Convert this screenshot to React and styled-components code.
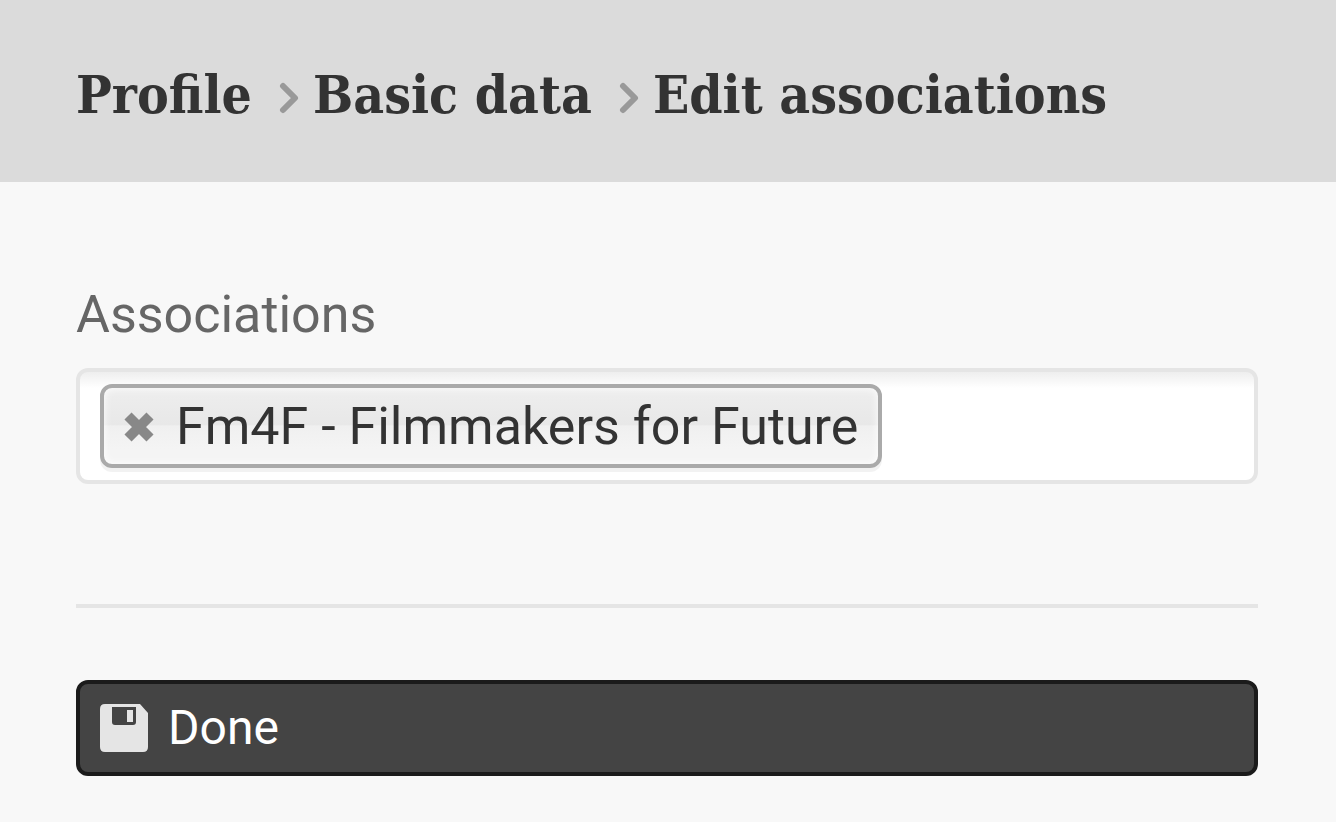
import { Fragment, useState } from "react";
import styled, { createGlobalStyle } from "styled-components";

const GlobalStyle = createGlobalStyle`
  * {
    box-sizing: border-box;
  }
  body {
    margin: 0;
    background: #f8f8f8;
    color: #333;
    font-family: Roboto, "Liberation Sans", sans-serif;
  }
`;

const Header = styled.header`
  padding: 58px 78px 52px 76px;
  background: #dbdbdb;
`;
const Breadcrumbs = styled.nav`
  display: flex;
  flex-wrap: wrap;
  align-items: center;
  font-family: "Roboto Slab", "DejaVu Serif Condensed", "DejaVu Serif", serif;
  font-size: 53px;
  font-weight: 700;
  line-height: 72px;
`;
const Crumb = styled.a`
  color: #333;
  text-decoration: none;
`;
const Chevron = styled.svg`
  width: 20px;
  height: 32px;
  margin: 8px 14px 0 27px;
  fill: none;
  stroke: #999;
  stroke-width: 6px;
  stroke-linecap: round;
  stroke-linejoin: round;
`;

const Form = styled.form`
  padding: 101px 78px 46px 76px;
`;
const Label = styled.label`
  display: block;
  margin-bottom: 21px;
  color: #666;
  font-size: 52px;
  line-height: 64px;
`;
const Choices = styled.div`
  display: flex;
  flex-wrap: wrap;
  gap: 12px;
  padding: 12px 20px;
  border: 4px solid #e5e5e5;
  border-radius: 12px;
  background: #fff linear-gradient(#eee, #fff 16px);
`;
const Choice = styled.div`
  display: flex;
  align-items: center;
  gap: 22px;
  padding: 2px 20px 0;
  border: 4px solid #aaa;
  border-radius: 12px;
  background: linear-gradient(#eee, #e8e8e8 48%, #f0f0f0 50%, #f4f4f4 80%);
  box-shadow: inset 0 0 8px #fff, 0 4px 0 rgba(0, 0, 0, 0.05);
  font-size: 52px;
  line-height: 74px;
`;
const RemoveButton = styled.button`
  display: flex;
  padding: 0;
  border: 0;
  background: none;
  cursor: pointer;
  svg {
    width: 30px;
    height: 30px;
    fill: none;
    stroke: #888;
    stroke-width: 10px;
  }
`;
const SearchInput = styled.input`
  flex: 1;
  min-width: 40px;
  padding: 0;
  border: 0;
  outline: 0;
  background: transparent;
  color: #333;
  font: inherit;
  font-size: 52px;
`;
const Divider = styled.hr`
  height: 4px;
  margin: 120px 0 72px;
  border: 0;
  background: #e5e5e5;
`;
const SubmitButton = styled.button`
  display: flex;
  align-items: center;
  gap: 20px;
  width: 100%;
  padding: 12px 20px;
  border: 4px solid #1b1b1b;
  border-radius: 12px;
  background: #444;
  color: #fff;
  font: inherit;
  font-size: 48px;
  line-height: 64px;
  text-align: left;
  cursor: pointer;
`;
const SaveIcon = styled.svg`
  width: 48px;
  height: 48px;
  fill: #e5e5e5;
`;

const crumbs = ["Profile", "Basic data", "Edit associations"];

export default function App() {
  const [choices, setChoices] = useState(["Fm4F - Filmmakers for Future"]);

  const remove = (name) => setChoices(choices.filter((c) => c !== name));

  return (
    <>
      <GlobalStyle />
      <Header>
        <Breadcrumbs aria-label="Breadcrumb">
          {crumbs.map((name, i) => (
            <Fragment key={name}>
              {i > 0 && (
                <Chevron viewBox="0 0 20 32" aria-hidden="true">
                  <path d="M4 4L16 16L4 28" />
                </Chevron>
              )}
              <Crumb href="#">{name}</Crumb>
            </Fragment>
          ))}
        </Breadcrumbs>
      </Header>
      <Form onSubmit={(e) => e.preventDefault()}>
        <Label htmlFor="associations">Associations</Label>
        <Choices>
          {choices.map((name) => (
            <Choice key={name}>
              <RemoveButton
                type="button"
                aria-label={`Remove ${name}`}
                onClick={() => remove(name)}
              >
                <svg viewBox="0 0 30 30" aria-hidden="true">
                  <path d="M4 4L26 26M26 4L4 26" />
                </svg>
              </RemoveButton>
              <span>{name}</span>
            </Choice>
          ))}
          <SearchInput id="associations" type="text" autoComplete="off" />
        </Choices>
        <Divider />
        <SubmitButton type="submit">
          <SaveIcon viewBox="0 0 48 48" aria-hidden="true">
            <path
              fillRule="evenodd"
              d="M5 0H40L48 9V43Q48 48 43 48H5Q0 48 0 43V5Q0 0 5 0ZM12 3V18Q12 21 15 21H33Q36 21 36 18V3Z"
            />
            <path d="M27 6H33V18H27Z" />
          </SaveIcon>
          Done
        </SubmitButton>
      </Form>
    </>
  );
}
